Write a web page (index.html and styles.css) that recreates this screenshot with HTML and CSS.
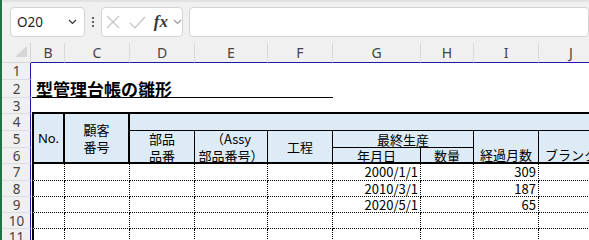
FILE: index.html
```html
<!DOCTYPE html>
<html lang="ja">
<head>
<meta charset="UTF-8" />
<meta name="viewport" content="width=device-width, initial-scale=1" />
<title>型管理台帳の雛形</title>
<link rel="stylesheet" href="styles.css">
</head>
<body>
  <div class="app">
    <div class="toolbar">
      <div class="namebox">
        <span>O20</span>
        <svg class="chev" width="9" height="6" viewBox="0 0 9 6"><polyline points="1,1 4.5,4.5 8,1" fill="none" stroke="#333" stroke-width="1.2"/></svg>
      </div>
      <div class="dots">
        <svg width="4" height="12" viewBox="0 0 4 12"><circle cx="2" cy="2" r="1.1" fill="#444"/><circle cx="2" cy="6" r="1.1" fill="#444"/><circle cx="2" cy="10" r="1.1" fill="#444"/></svg>
      </div>
      <div class="fxgroup">
        <svg width="14" height="14" viewBox="0 0 14 14"><path d="M1 1 L13 13 M13 1 L1 13" stroke="#c4c4c4" stroke-width="1.2" fill="none"/></svg>
        <svg width="17" height="13" viewBox="0 0 17 13"><polyline points="1,7 6,12 16,1" stroke="#c4c4c4" stroke-width="1.2" fill="none"/></svg>
        <span class="fx">fx</span>
        <svg width="9" height="6" viewBox="0 0 9 6"><polyline points="1,1 4.5,4.5 8,1" fill="none" stroke="#999" stroke-width="1.1"/></svg>
      </div>
      <div class="formula"></div>
    </div>

    <div class="sheet">
      <!-- column headers -->
      <div class="corner"><svg width="12" height="11" viewBox="0 0 12 11"><polygon points="12,0 12,11 0,11" fill="#d6d6d6"/></svg></div>
      <div class="ch ch-a"></div>
      <div class="ch">B</div>
      <div class="ch">C</div>
      <div class="ch">D</div>
      <div class="ch">E</div>
      <div class="ch">F</div>
      <div class="ch">G</div>
      <div class="ch">H</div>
      <div class="ch">I</div>
      <div class="ch">J</div>

      <!-- row 1 -->
      <div class="rh">1</div>
      <div class="gap"></div>
      <div class="blank span-c9"></div>

      <!-- row 2 -->
      <div class="rh">2</div>
      <div class="gap"></div>
      <div class="title span-c5">型管理台帳の雛形</div>
      <div class="blank span-c4"></div>

      <!-- row 3 -->
      <div class="rh">3</div>
      <div class="gap"></div>
      <div class="blank top-edge span-c9"></div>

      <!-- rows 4-6: table header -->
      <div class="rh">4</div>
      <div class="gap"></div>
      <div class="h h-first thick-r thick-b span-r3">No.</div>
      <div class="h thick-r thick-b span-r3">顧客<br>番号</div>
      <div class="h thin-b span-c7"></div>

      <div class="rh">5</div>
      <div class="gap"></div>
      <div class="h thin-r thick-b span-r2">部品<br>品番</div>
      <div class="h thin-r thick-b span-r2">（Assy<br>部品番号）</div>
      <div class="h thin-r thick-b span-r2">工程</div>
      <div class="h thin-r thin-b span-c2">最終生産</div>
      <div class="h h-low thin-r thick-b span-r2">経過月数</div>
      <div class="h h-low thin-r thick-b span-r2">ブランク</div>

      <div class="rh">6</div>
      <div class="gap"></div>
      <div class="h thin-r thick-b">年月日</div>
      <div class="h thin-r thick-b">数量</div>

      <!-- data rows -->
      <div class="rh">7</div>
      <div class="gap"></div>
      <div class="d d-first"></div><div class="d"></div><div class="d"></div><div class="d"></div><div class="d"></div>
      <div class="d num">2000/1/1</div><div class="d"></div><div class="d num">309</div><div class="d"></div>

      <div class="rh">8</div>
      <div class="gap"></div>
      <div class="d d-first"></div><div class="d"></div><div class="d"></div><div class="d"></div><div class="d"></div>
      <div class="d num">2010/3/1</div><div class="d"></div><div class="d num">187</div><div class="d"></div>

      <div class="rh">9</div>
      <div class="gap"></div>
      <div class="d d-first"></div><div class="d"></div><div class="d"></div><div class="d"></div><div class="d"></div>
      <div class="d num">2020/5/1</div><div class="d"></div><div class="d num">65</div><div class="d"></div>

      <div class="rh">10</div>
      <div class="gap"></div>
      <div class="d d-first"></div><div class="d"></div><div class="d"></div><div class="d"></div><div class="d"></div>
      <div class="d"></div><div class="d"></div><div class="d"></div><div class="d"></div>

      <div class="rh">11</div>
      <div class="gap"></div>
      <div class="d d-first"></div><div class="d"></div><div class="d"></div><div class="d"></div><div class="d"></div>
      <div class="d"></div><div class="d"></div><div class="d"></div><div class="d"></div>
    </div>
  </div>
</body>
</html>
```

FILE: styles.css
```css
body {
  margin: 0;
  background: #ffffff;
  overflow: hidden;
}
.app {
  width: 589px;
  height: 240px;
  box-sizing: border-box;
  border-left: 2px solid #217346;
  background: #f0f0f0;
  overflow: hidden;
}
.toolbar {
  height: 43px;
  box-sizing: border-box;
  border-top: 2px solid #e2e2e2;
  display: flex;
  align-items: flex-start;
  padding: 5px 0 0 8px;
}
.namebox {
  width: 100px;
  height: 30px;
  box-sizing: border-box;
  background: #ffffff;
  border: 1px solid #d4d4d4;
  border-radius: 4px;
  display: flex;
  align-items: center;
  justify-content: space-between;
  padding: 0 7px 0 6px;
  font-family: "Noto Sans", sans-serif;
  font-size: 13.5px;
  color: #1f1f1f;
}
.dots {
  width: 22px;
  height: 30px;
  display: flex;
  align-items: center;
  justify-content: center;
}
.fxgroup {
  width: 84px;
  height: 30px;
  box-sizing: border-box;
  background: #ffffff;
  border: 1px solid #d4d4d4;
  border-radius: 4px;
  display: flex;
  align-items: center;
  gap: 9px;
  padding-left: 4px;
}
.fx {
  font-family: "Liberation Serif", serif;
  font-style: italic;
  font-weight: 700;
  font-size: 17px;
  color: #3a3a3a;
  margin-left: -1px;
  margin-right: -4px;
}
.formula {
  width: 400px;
  flex: none;
  height: 30px;
  box-sizing: border-box;
  margin-left: 6px;
  background: #ffffff;
  border: 1px solid #d4d4d4;
  border-radius: 4px;
}

.sheet {
  display: grid;
  grid-template-columns: 29px 1px 33px 65px 65px 73px 65px 88px 53px 65px 65px;
  grid-template-rows: 20px 17px 18px 16px 17px 17px 16px 17px 16px 16px 16px 16px;
  background: #ffffff;
  font-family: "Noto Sans CJK JP", sans-serif;
  font-size: 13px;
  color: #000;
}
.sheet > div {
  box-sizing: border-box;
  min-width: 0;
}
.corner {
  background: #f0f0f0;
  border-right: 1px solid #d6d6d6;
  border-bottom: 1px solid #d6d6d6;
  display: flex;
  align-items: flex-end;
  justify-content: flex-end;
  padding: 0 3px 5px 0;
}
.ch {
  background: #f0f0f0;
  border-right: 1px solid #dadada;
  border-bottom: 1px solid #1a1aa6;
  display: flex;
  align-items: center;
  justify-content: center;
  font-family: "Noto Sans", sans-serif;
  font-size: 14px;
  line-height: 16px;
  color: #444;
}
.ch-a {
  border-right: none;
}
.rh {
  background: #f0f0f0;
  border-right: 1px solid #1a1aa6;
  border-bottom: 1px solid #dcdcdc;
  display: flex;
  align-items: center;
  justify-content: center;
  font-family: "Noto Sans", sans-serif;
  font-size: 13.5px;
  line-height: 14px;
  color: #444;
  padding-left: 1px;
}
.gap {
  background: #ffffff;
}
.blank {
  background: #ffffff;
}
.top-edge {
  border-bottom: 2px solid #000;
}
.title {
  border-bottom: 1px solid #000;
  font-weight: 700;
  font-size: 17px;
  line-height: 16px;
  padding: 0 0 0 4px;
  display: flex;
  align-items: center;
  white-space: nowrap;
}

.span-c9 { grid-column: span 9; }
.span-c7 { grid-column: span 7; }
.span-c5 { grid-column: span 5; }
.span-c4 { grid-column: span 4; }
.span-c2 { grid-column: span 2; }
.span-r3 { grid-row: span 3; }
.span-r2 { grid-row: span 2; }

.h {
  background: #ddebf7;
  display: flex;
  align-items: center;
  justify-content: center;
  text-align: center;
  line-height: 17px;
  white-space: nowrap;
}
.h-first {
  border-left: 2px solid #000;
  font-family: "Noto Sans", sans-serif;
}
.h-low {
  align-items: flex-end;
  line-height: 15px;
}
.thick-r { border-right: 2px solid #000; }
.thick-b { border-bottom: 2px solid #000; }
.thin-r { border-right: 1px solid #000; }
.thin-b { border-bottom: 1px solid #000; }

.d {
  border-right: 1px dotted #000;
  border-bottom: 1px dotted #000;
  line-height: 15px;
  white-space: nowrap;
}
.d-first {
  border-left: 2px solid #000;
}
.num {
  text-align: right;
  padding-right: 2px;
}
```
